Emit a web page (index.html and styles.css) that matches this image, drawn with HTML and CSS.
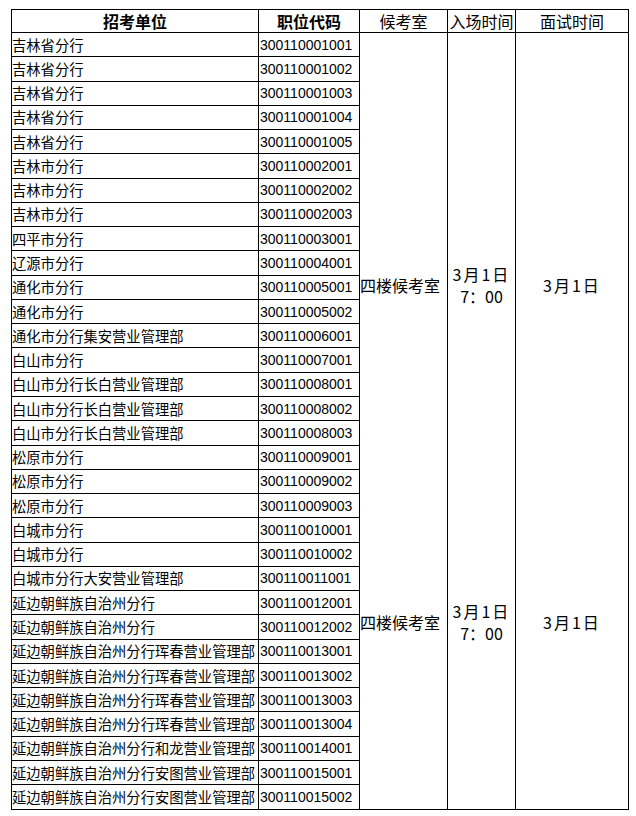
FILE: index.html
```html
<!DOCTYPE html>
<html lang="zh-CN">
<head>
<meta charset="utf-8">
<title>面试安排</title>
<link rel="stylesheet" href="styles.css">
</head>
<body>
<table class="sheet">
  <colgroup>
    <col class="c-unit">
    <col class="c-code">
    <col class="c-room">
    <col class="c-entry">
    <col class="c-exam">
  </colgroup>
  <thead>
    <tr class="head">
      <th class="bold">招考单位</th>
      <th class="bold">职位代码</th>
      <th>候考室</th>
      <th>入场时间</th>
      <th>面试时间</th>
    </tr>
  </thead>
  <tbody>
    <tr><td class="unit">吉林省分行</td><td class="code">300110001001</td>
      <td class="merge room first" rowspan="21">四楼候考室</td>
      <td class="merge entry first" rowspan="21"><div>3月1日</div><div class="time">7：00</div></td>
      <td class="merge exam first" rowspan="21">3月1日</td></tr>
    <tr><td class="unit">吉林省分行</td><td class="code">300110001002</td></tr>
    <tr><td class="unit">吉林省分行</td><td class="code">300110001003</td></tr>
    <tr><td class="unit">吉林省分行</td><td class="code">300110001004</td></tr>
    <tr><td class="unit">吉林省分行</td><td class="code">300110001005</td></tr>
    <tr><td class="unit">吉林市分行</td><td class="code">300110002001</td></tr>
    <tr><td class="unit">吉林市分行</td><td class="code">300110002002</td></tr>
    <tr><td class="unit">吉林市分行</td><td class="code">300110002003</td></tr>
    <tr><td class="unit">四平市分行</td><td class="code">300110003001</td></tr>
    <tr><td class="unit">辽源市分行</td><td class="code">300110004001</td></tr>
    <tr><td class="unit">通化市分行</td><td class="code">300110005001</td></tr>
    <tr><td class="unit">通化市分行</td><td class="code">300110005002</td></tr>
    <tr><td class="unit">通化市分行集安营业管理部</td><td class="code">300110006001</td></tr>
    <tr><td class="unit">白山市分行</td><td class="code">300110007001</td></tr>
    <tr><td class="unit">白山市分行长白营业管理部</td><td class="code">300110008001</td></tr>
    <tr><td class="unit">白山市分行长白营业管理部</td><td class="code">300110008002</td></tr>
    <tr><td class="unit">白山市分行长白营业管理部</td><td class="code">300110008003</td></tr>
    <tr><td class="unit">松原市分行</td><td class="code">300110009001</td></tr>
    <tr><td class="unit">松原市分行</td><td class="code">300110009002</td></tr>
    <tr><td class="unit">松原市分行</td><td class="code">300110009003</td></tr>
    <tr><td class="unit">白城市分行</td><td class="code">300110010001</td></tr>
    <tr><td class="unit">白城市分行</td><td class="code">300110010002</td>
      <td class="merge room second" rowspan="11">四楼候考室</td>
      <td class="merge entry second" rowspan="11"><div>3月1日</div><div class="time">7：00</div></td>
      <td class="merge exam second" rowspan="11">3月1日</td></tr>
    <tr><td class="unit">白城市分行大安营业管理部</td><td class="code">300110011001</td></tr>
    <tr><td class="unit">延边朝鲜族自治州分行</td><td class="code">300110012001</td></tr>
    <tr><td class="unit">延边朝鲜族自治州分行</td><td class="code">300110012002</td></tr>
    <tr><td class="unit">延边朝鲜族自治州分行珲春营业管理部</td><td class="code">300110013001</td></tr>
    <tr><td class="unit">延边朝鲜族自治州分行珲春营业管理部</td><td class="code">300110013002</td></tr>
    <tr><td class="unit">延边朝鲜族自治州分行珲春营业管理部</td><td class="code">300110013003</td></tr>
    <tr><td class="unit">延边朝鲜族自治州分行珲春营业管理部</td><td class="code">300110013004</td></tr>
    <tr><td class="unit">延边朝鲜族自治州分行和龙营业管理部</td><td class="code">300110014001</td></tr>
    <tr><td class="unit">延边朝鲜族自治州分行安图营业管理部</td><td class="code">300110015001</td></tr>
    <tr><td class="unit">延边朝鲜族自治州分行安图营业管理部</td><td class="code">300110015002</td></tr>
  </tbody>
</table>
</body>
</html>
```
FILE: styles.css
```css
html, body {
  margin: 0;
  padding: 0;
  background: #fff;
}

body {
  font-family: "Noto Sans CJK SC", "Liberation Sans", sans-serif;
  color: #000;
}

.sheet {
  border-collapse: collapse;
  table-layout: fixed;
  width: 618px;
  margin: 9px 0 0 11px;
}

.c-unit { width: 247px; }
.c-code { width: 101px; }
.c-room { width: 88px; }
.c-entry { width: 68px; }
.c-exam { width: 113px; }

.sheet th,
.sheet td {
  border: 1px solid #000;
  padding: 0;
  white-space: nowrap;
  overflow: hidden;
}

.sheet .head {
  height: 23px;
}

.sheet .head th {
  font-size: 16px;
  font-weight: 400;
  line-height: 20px;
  text-align: center;
  vertical-align: middle;
}

.sheet .head th.bold {
  font-weight: 700;
}

.sheet tbody tr {
  height: 24.28px;
}

.sheet td.unit {
  font-size: 14.3px;
  line-height: 18px;
  text-align: left;
  vertical-align: middle;
}

.sheet td.code {
  font-family: "Liberation Sans", Arial, sans-serif;
  font-size: 14px;
  line-height: 18px;
  text-align: left;
  vertical-align: middle;
  padding-left: 1px;
}

.sheet td.merge {
  font-size: 16px;
  line-height: 22px;
  vertical-align: middle;
}

.sheet td.room {
  text-align: left;
  padding-left: 0;
}

.sheet td.entry,
.sheet td.exam {
  text-align: center;
  letter-spacing: 2px;
}

.sheet td.entry .time {
  letter-spacing: 0;
}

.sheet td.first {
  border-bottom-style: hidden;
  padding-bottom: 5px;
}

.sheet td.second {
  border-top-style: hidden;
  padding-bottom: 106px;
}
```
